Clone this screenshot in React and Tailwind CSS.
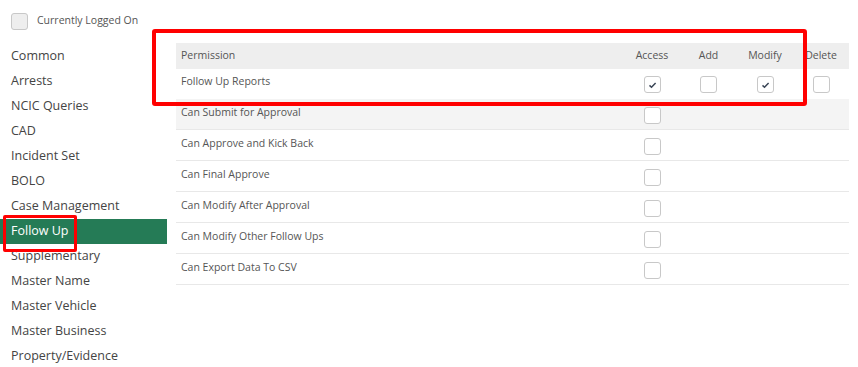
import React from "react";

const modules = [
  "Common",
  "Arrests",
  "NCIC Queries",
  "CAD",
  "Incident Set",
  "BOLO",
  "Case Management",
  "Follow Up",
  "Supplementary",
  "Master Name",
  "Master Vehicle",
  "Master Business",
  "Property/Evidence",
];

const subRows = [
  "Can Submit for Approval",
  "Can Approve and Kick Back",
  "Can Final Approve",
  "Can Modify After Approval",
  "Can Modify Other Follow Ups",
  "Can Export Data To CSV",
];

function Box({ checked = false, gray = false }) {
  return (
    <div
      className={`w-[17px] h-[17px] rounded-[3px] border border-[#c8c8c8] flex items-center justify-center ${
        gray ? "bg-[#eeeeee]" : "bg-white"
      }`}
    >
      {checked && (
        <svg width="9" height="8" viewBox="0 0 9 8" className="mt-[1px]">
          <path d="M1.5 4.4 L3.5 6.2 L7.6 1.9" fill="none" stroke="#3a4556" strokeWidth="1.5" />
        </svg>
      )}
    </div>
  );
}

const cols = "grid grid-cols-[448px_56px_57px_56px_56px]";

export default function App() {
  return (
    <div
      className="relative w-[858px] h-[367px] bg-white text-[#555] overflow-hidden"
      style={{ fontFamily: '"Open Sans", "Noto Sans", sans-serif' }}
    >
      {/* Top filter */}
      <div className="flex items-center gap-[9px] pl-[11px] pt-[12px] h-[30px]">
        <Box gray />
        <span className="text-[10.5px] text-[#555]">Currently Logged On</span>
      </div>

      <div className="flex mt-[13px]">
        {/* Module list */}
        <div className="w-[167px] flex flex-col pt-[1px]">
          {modules.map((m) => (
            <div
              key={m}
              className={`h-[25px] pl-[11px] flex items-center text-[12.5px] ${
                m === "Follow Up" ? "bg-[#257b56] text-white" : "text-[#444]"
              }`}
            >
              {m}
            </div>
          ))}
        </div>

        {/* Permissions table */}
        <div className="ml-[9px] w-[673px] text-[10.5px]">
          <div className={`${cols} h-[26px] bg-[#eeeeee] items-center`}>
            <div className="pl-[5px]">Permission</div>
            <div className="text-center">Access</div>
            <div className="text-center">Add</div>
            <div className="text-center">Modify</div>
            <div className="text-center">Delete</div>
          </div>
          <div className={`${cols} h-[30px] items-center`}>
            <div className="pl-[5px] -mt-[4px]">Follow Up Reports</div>
            <div className="flex justify-center">
              <Box checked />
            </div>
            <div className="flex justify-center">
              <Box />
            </div>
            <div className="flex justify-center">
              <Box checked />
            </div>
            <div className="flex justify-center">
              <Box />
            </div>
          </div>
          {subRows.map((r, i) => (
            <div
              key={r}
              className={`${cols} h-[31px] items-center border-b border-[#e8e8e8] ${
                i === 0 ? "bg-[#f4f4f4]" : ""
              }`}
            >
              <div className="pl-[5px] -mt-[3px]">{r}</div>
              <div className="flex justify-center pt-[2px]">
                <Box />
              </div>
              <div />
              <div />
              <div />
            </div>
          ))}
        </div>
      </div>

      {/* Annotation boxes */}
      <div className="absolute left-[152px] top-[29px] w-[655px] h-[77px] border-4 border-[#ff0000] rounded-[3px] pointer-events-none" />
      <div className="absolute left-[3px] top-[215px] w-[74px] h-[37px] border-[3px] border-[#ff0000] rounded-[2px] pointer-events-none" />
    </div>
  );
}
